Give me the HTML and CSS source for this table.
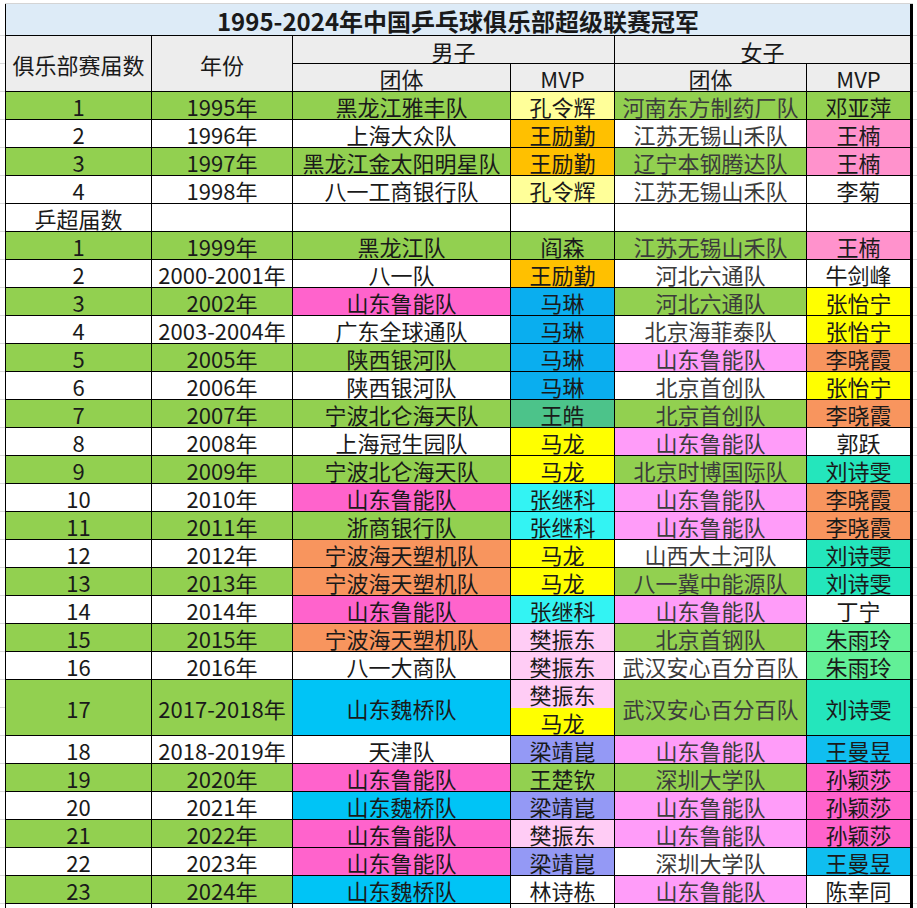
FILE: index.html
```html
<!DOCTYPE html>
<html lang="zh-CN">
<head>
<meta charset="utf-8">
<title>1995-2024年中国乒乓球俱乐部超级联赛冠军</title>
<link rel="stylesheet" href="styles.css">
</head>
<body>
<div class="sheet">
  <div class="c title">1995-2024年中国乒乓球俱乐部超级联赛冠军</div>
  <div class="c hd r2">俱乐部赛届数</div>
  <div class="c hd r2">年份</div>
  <div class="c hd s2 hs">男子</div>
  <div class="c hd s2 hs">女子</div>
  <div class="c hd">团体</div>
  <div class="c hd">MVP</div>
  <div class="c hd">团体</div>
  <div class="c hd">MVP</div>

  <div class="c g">1</div><div class="c g">1995年</div><div class="c g">黑龙江雅丰队</div><div class="c ly">孔令辉</div><div class="c g w">河南东方制药厂队</div><div class="c g">邓亚萍</div>
  <div class="c">2</div><div class="c">1996年</div><div class="c">上海大众队</div><div class="c or">王励勤</div><div class="c w">江苏无锡山禾队</div><div class="c pk">王楠</div>
  <div class="c g">3</div><div class="c g">1997年</div><div class="c g">黑龙江金太阳明星队</div><div class="c or">王励勤</div><div class="c g w">辽宁本钢腾达队</div><div class="c pk">王楠</div>
  <div class="c">4</div><div class="c">1998年</div><div class="c">八一工商银行队</div><div class="c ly">孔令辉</div><div class="c w">江苏无锡山禾队</div><div class="c">李菊</div>
  <div class="c">乒超届数</div><div class="c"></div><div class="c"></div><div class="c"></div><div class="c"></div><div class="c"></div>
  <div class="c g">1</div><div class="c g">1999年</div><div class="c g">黑龙江队</div><div class="c g">阎森</div><div class="c g w">江苏无锡山禾队</div><div class="c pk">王楠</div>
  <div class="c">2</div><div class="c">2000-2001年</div><div class="c">八一队</div><div class="c or">王励勤</div><div class="c w">河北六通队</div><div class="c">牛剑峰</div>
  <div class="c g">3</div><div class="c g">2002年</div><div class="c mg">山东鲁能队</div><div class="c bl">马琳</div><div class="c g w">河北六通队</div><div class="c ye">张怡宁</div>
  <div class="c">4</div><div class="c">2003-2004年</div><div class="c">广东全球通队</div><div class="c bl">马琳</div><div class="c w">北京海菲泰队</div><div class="c ye">张怡宁</div>
  <div class="c g">5</div><div class="c g">2005年</div><div class="c g">陕西银河队</div><div class="c bl">马琳</div><div class="c lp w">山东鲁能队</div><div class="c oa">李晓霞</div>
  <div class="c">6</div><div class="c">2006年</div><div class="c">陕西银河队</div><div class="c bl">马琳</div><div class="c w">北京首创队</div><div class="c ye">张怡宁</div>
  <div class="c g">7</div><div class="c g">2007年</div><div class="c g">宁波北仑海天队</div><div class="c wh">王皓</div><div class="c g w">北京首创队</div><div class="c oa">李晓霞</div>
  <div class="c">8</div><div class="c">2008年</div><div class="c">上海冠生园队</div><div class="c ye">马龙</div><div class="c lp w">山东鲁能队</div><div class="c">郭跃</div>
  <div class="c g">9</div><div class="c g">2009年</div><div class="c g">宁波北仑海天队</div><div class="c ye">马龙</div><div class="c g w">北京时博国际队</div><div class="c tq">刘诗雯</div>
  <div class="c">10</div><div class="c">2010年</div><div class="c mg">山东鲁能队</div><div class="c cy">张继科</div><div class="c lp w">山东鲁能队</div><div class="c oa">李晓霞</div>
  <div class="c g">11</div><div class="c g">2011年</div><div class="c g">浙商银行队</div><div class="c cy">张继科</div><div class="c lp w">山东鲁能队</div><div class="c oa">李晓霞</div>
  <div class="c">12</div><div class="c">2012年</div><div class="c oa">宁波海天塑机队</div><div class="c ye">马龙</div><div class="c w">山西大土河队</div><div class="c tq">刘诗雯</div>
  <div class="c g">13</div><div class="c g">2013年</div><div class="c oa">宁波海天塑机队</div><div class="c ye">马龙</div><div class="c g w">八一冀中能源队</div><div class="c tq">刘诗雯</div>
  <div class="c">14</div><div class="c">2014年</div><div class="c mg">山东鲁能队</div><div class="c cy">张继科</div><div class="c lp w">山东鲁能队</div><div class="c">丁宁</div>
  <div class="c g">15</div><div class="c g">2015年</div><div class="c oa">宁波海天塑机队</div><div class="c lk">樊振东</div><div class="c g w">北京首钢队</div><div class="c sg">朱雨玲</div>
  <div class="c">16</div><div class="c">2016年</div><div class="c">八一大商队</div><div class="c lk">樊振东</div><div class="c w">武汉安心百分百队</div><div class="c sg">朱雨玲</div>
  <div class="c g r2">17</div><div class="c g r2">2017-2018年</div><div class="c wq r2">山东魏桥队</div>
  <div class="c r2 split"><div class="half lk">樊振东</div><div class="half ye">马龙</div></div>
  <div class="c g w r2">武汉安心百分百队</div><div class="c tq r2">刘诗雯</div>
  <div class="c">18</div><div class="c">2018-2019年</div><div class="c">天津队</div><div class="c pw">梁靖崑</div><div class="c lp w">山东鲁能队</div><div class="c wb">王曼昱</div>
  <div class="c g">19</div><div class="c g">2020年</div><div class="c mg">山东鲁能队</div><div class="c g">王楚钦</div><div class="c g w">深圳大学队</div><div class="c mg">孙颖莎</div>
  <div class="c">20</div><div class="c">2021年</div><div class="c wq">山东魏桥队</div><div class="c pw">梁靖崑</div><div class="c lp w">山东鲁能队</div><div class="c mg">孙颖莎</div>
  <div class="c g">21</div><div class="c g">2022年</div><div class="c mg">山东鲁能队</div><div class="c lk">樊振东</div><div class="c lp w">山东鲁能队</div><div class="c mg">孙颖莎</div>
  <div class="c">22</div><div class="c">2023年</div><div class="c mg">山东鲁能队</div><div class="c pw">梁靖崑</div><div class="c w">深圳大学队</div><div class="c wb">王曼昱</div>
  <div class="c g">23</div><div class="c g">2024年</div><div class="c wq">山东魏桥队</div><div class="c">林诗栋</div><div class="c lp w">山东鲁能队</div><div class="c">陈幸同</div>
  <div class="c"></div><div class="c"></div><div class="c"></div><div class="c"></div><div class="c"></div><div class="c"></div>
</div>
</body>
</html>
```
FILE: styles.css
```css
html, body {
  margin: 0;
  padding: 0;
}
body {
  width: 917px;
  height: 908px;
  overflow: hidden;
  background-color: #ffffff;
  background-image: repeating-linear-gradient(to bottom, transparent 0 27px, #dadada 27px 28px);
  background-position: 0 8px;
  font-family: "Noto Sans CJK SC", "Noto Sans", sans-serif;
  color: #1a1a1a;
}
.sheet {
  margin: 4px 0 0 5px;
  width: 906px;
  display: grid;
  grid-template-columns: 145px 140px 217px 103px 191px 103px;
  grid-template-rows: 31px;
  grid-auto-rows: 27px;
  gap: 1px;
  padding: 0 1px 1px 1px;
  background: #000;
  box-shadow: 0 -1px 0 #d4d4d4;
}
.c {
  background: #ffffff;
  display: flex;
  align-items: center;
  justify-content: center;
  font-size: 22px;
  line-height: 22px;
  white-space: nowrap;
  overflow: hidden;
  padding-top: 1px;
  box-sizing: border-box;
}
.title {
  grid-column: 1 / -1;
  background: #ddebf7;
  font-weight: bold;
  font-size: 24px;
  line-height: 24px;
  padding-top: 3px;
}
.hd { background: #ededed; }
.hs { padding-top: 3px; }
.r2 { grid-row: span 2; }
.s2 { grid-column: span 2; }
.w { color: #3c3c3c; }
.split {
  flex-direction: column;
  align-items: stretch;
  padding-top: 0;
}
.half {
  flex: 1;
  display: flex;
  align-items: center;
  justify-content: center;
  padding-top: 1px;
  box-sizing: border-box;
}
.g  { background: #92d050; }
.ly { background: #ffff99; }
.or { background: #ffc000; }
.pk { background: #ff92cc; }
.mg { background: #ff63cc; }
.bl { background: #0aaeef; }
.lp { background: #ff9cf9; }
.ye { background: #ffff00; }
.cy { background: #33f3f3; }
.tq { background: #24e6bc; }
.oa { background: #f8955e; }
.sg { background: #62f097; }
.lk { background: #ffccf5; }
.pw { background: #9499f5; }
.wb { background: #10bef0; }
.wq { background: #00c4f6; }
.wh { background: #4cc38a; }
```
